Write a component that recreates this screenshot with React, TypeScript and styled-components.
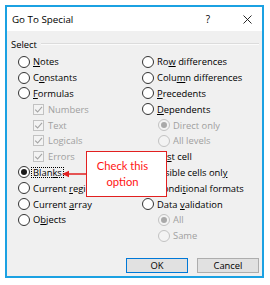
import React from 'react';
import styled, { createGlobalStyle } from 'styled-components';

const GlobalStyle = createGlobalStyle`
  html, body { margin: 0; padding: 0; background: #fff; }
  body { font-family: "Open Sans", "Noto Sans", sans-serif; }
`;

const Dialog = styled.div`
  position: relative;
  margin: 5px 0 0 5px;
  width: 259px;
  height: 273px;
  box-sizing: border-box;
  border: 2px solid #1ba1e2;
  display: flex;
  flex-direction: column;
  background: #f0f0f0;
  font-size: 9.4px;
  color: #000;
`;

const TitleBar = styled.div`
  height: 24px;
  flex: none;
  background: #fff;
  display: flex;
  align-items: center;
  padding-left: 5px;
`;

const Title = styled.div`
  flex: 1;
  font-size: 9.8px;
`;

const HelpButton = styled.div`
  width: 12px;
  text-align: center;
  margin-right: 18px;
  font-size: 10px;
`;

const CloseButton = styled.div`
  width: 30px;
  height: 24px;
  display: flex;
  align-items: center;
  justify-content: center;
`;

const Body = styled.div`
  flex: 1;
  display: flex;
  flex-direction: column;
  padding: 6px 3px 3px 4px;
`;

const GroupHeader = styled.div`
  height: 14px;
  display: flex;
  align-items: center;
  gap: 4px;
`;

const GroupLine = styled.div`
  flex: 1;
  height: 1px;
  background: #dcdcdc;
  border-bottom: 1px solid #fbfbfb;
`;

const Columns = styled.div`
  display: grid;
  grid-template-columns: 124px 1fr;
  margin-top: 3px;
  padding-left: 7px;
`;

const Column = styled.div`
  display: flex;
  flex-direction: column;
`;

const Row = styled.div<{ $indent?: number; $gap?: number }>`
  height: 15.8px;
  display: flex;
  align-items: center;
  gap: ${p => p.$gap ?? 2}px;
  padding-left: ${p => p.$indent ?? 0}px;
  white-space: nowrap;
`;

const RadioCircle = styled.span<{ $checked?: boolean; $disabled?: boolean }>`
  box-sizing: border-box;
  width: 12px;
  height: 12px;
  flex: none;
  border-radius: 50%;
  border: 1px solid ${p => (p.$disabled ? '#c2c2c2' : '#333')};
  background: ${p => (p.$disabled ? '#f3f3f3' : '#fff')};
  display: flex;
  align-items: center;
  justify-content: center;
  &::after {
    content: '';
    width: 6px;
    height: 6px;
    border-radius: 50%;
    background: ${p => (p.$disabled ? '#a9a9a9' : '#1b1b1b')};
    display: ${p => (p.$checked ? 'block' : 'none')};
  }
`;

const CheckBox = styled.span`
  box-sizing: border-box;
  width: 11px;
  height: 11px;
  flex: none;
  border: 1px solid #c2c2c2;
  background: #f3f3f3;
  display: flex;
  align-items: center;
  justify-content: center;
`;

const Label = styled.span<{ $disabled?: boolean; $focus?: boolean }>`
  color: ${p => (p.$disabled ? '#a0a0a0' : '#000')};
  border: 1px ${p => (p.$focus ? 'dotted #000' : 'solid transparent')};
  padding: 0 1px;
  line-height: 9px;
  margin-left: -1px;
  u {
    text-decoration: underline;
    text-underline-offset: 1px;
  }
`;

const Footer = styled.div`
  margin-top: auto;
  display: flex;
  justify-content: flex-end;
  gap: 9px;
`;

const Button = styled.div<{ $primary?: boolean }>`
  box-sizing: border-box;
  width: 62px;
  height: 15px;
  display: flex;
  align-items: center;
  justify-content: center;
  background: #e1e1e1;
  border: 1px solid ${p => (p.$primary ? '#0078d7' : '#adadad')};
`;

const Callout = styled.div`
  position: absolute;
  left: 55px;
  top: 144px;
  display: flex;
  align-items: center;
`;

const CalloutBox = styled.div`
  box-sizing: border-box;
  width: 81px;
  height: 46px;
  background: #fff;
  border: 1px solid #e22020;
  color: #ff1414;
  font-family: "Lato", "Open Sans", sans-serif;
  font-size: 11.2px;
  line-height: 16px;
  display: flex;
  flex-direction: column;
  align-items: center;
  justify-content: center;
  padding-right: 8px;
`;

type Item = {
  kind: 'radio' | 'check' | 'sub';
  label: React.ReactNode;
  checked?: boolean;
  disabled?: boolean;
  focus?: boolean;
};

const ul = (before: string, key: string, after: string) => (
  <>
    {before}
    <u>{key}</u>
    {after}
  </>
);

const left: Item[] = [
  { kind: 'radio', label: ul('', 'N', 'otes') },
  { kind: 'radio', label: ul('C', 'o', 'nstants') },
  { kind: 'radio', label: ul('', 'F', 'ormulas') },
  { kind: 'check', label: 'Numbers', checked: true, disabled: true },
  { kind: 'check', label: 'Text', checked: true, disabled: true },
  { kind: 'check', label: 'Logicals', checked: true, disabled: true },
  { kind: 'check', label: 'Errors', checked: true, disabled: true },
  { kind: 'radio', label: ul('Blan', 'k', 's'), checked: true, focus: true },
  { kind: 'radio', label: ul('Current ', 'r', 'egion') },
  { kind: 'radio', label: ul('Current ', 'a', 'rray') },
  { kind: 'radio', label: ul('O', 'b', 'jects') },
];

const right: Item[] = [
  { kind: 'radio', label: ul('Ro', 'w', ' differences') },
  { kind: 'radio', label: ul('Colu', 'm', 'n differences') },
  { kind: 'radio', label: ul('', 'P', 'recedents') },
  { kind: 'radio', label: ul('', 'D', 'ependents') },
  { kind: 'sub', label: 'Direct only', checked: true, disabled: true },
  { kind: 'sub', label: 'All levels', disabled: true },
  { kind: 'radio', label: ul('La', 's', 't cell') },
  { kind: 'radio', label: ul('Visible cells onl', 'y', '') },
  { kind: 'radio', label: ul('Condi', 't', 'ional formats') },
  { kind: 'radio', label: ul('Data ', 'v', 'alidation') },
  { kind: 'sub', label: 'All', checked: true, disabled: true },
  { kind: 'sub', label: 'Same', disabled: true },
];

const CheckMark = () => (
  <svg width="9" height="9" viewBox="0 0 9 9">
    <path d="M1.2 4.6 L3.6 7 L8 1.8" fill="none" stroke="#a3a3a3" strokeWidth="1.1" />
  </svg>
);

const Option = ({ item }: { item: Item }) => {
  if (item.kind === 'check') {
    return (
      <Row $indent={15} $gap={3}>
        <CheckBox>{item.checked && <CheckMark />}</CheckBox>
        <Label $disabled={item.disabled}>{item.label}</Label>
      </Row>
    );
  }
  return (
    <Row $indent={item.kind === 'sub' ? 16 : 0}>
      <RadioCircle $checked={item.checked} $disabled={item.disabled} />
      <Label $disabled={item.disabled} $focus={item.focus}>
        {item.label}
      </Label>
    </Row>
  );
};

export default function App() {
  return (
    <>
      <GlobalStyle />
      <Dialog>
        <TitleBar>
          <Title>Go To Special</Title>
          <HelpButton>?</HelpButton>
          <CloseButton>
            <svg width="9" height="9" viewBox="0 0 9 9">
              <path d="M0.5 0.5 L8.5 8.5 M8.5 0.5 L0.5 8.5" stroke="#111" strokeWidth="0.9" fill="none" />
            </svg>
          </CloseButton>
        </TitleBar>
        <Body>
          <GroupHeader>
            <span>Select</span>
            <GroupLine />
          </GroupHeader>
          <Columns>
            <Column>
              {left.map((it, i) => (
                <Option key={i} item={it} />
              ))}
            </Column>
            <Column>
              {right.map((it, i) => (
                <Option key={i} item={it} />
              ))}
            </Column>
          </Columns>
          <Footer>
            <Button $primary>OK</Button>
            <Button>Cancel</Button>
          </Footer>
        </Body>
        <Callout>
          <svg width="24" height="8" viewBox="0 0 24 8">
            <polygon points="0,4 7,0.8 7,7.2" fill="#e22020" />
            <line x1="6" y1="4" x2="24" y2="4" stroke="#e22020" strokeWidth="1.5" />
          </svg>
          <CalloutBox>
            <span>Check this</span>
            <span>option</span>
          </CalloutBox>
        </Callout>
      </Dialog>
    </>
  );
}
